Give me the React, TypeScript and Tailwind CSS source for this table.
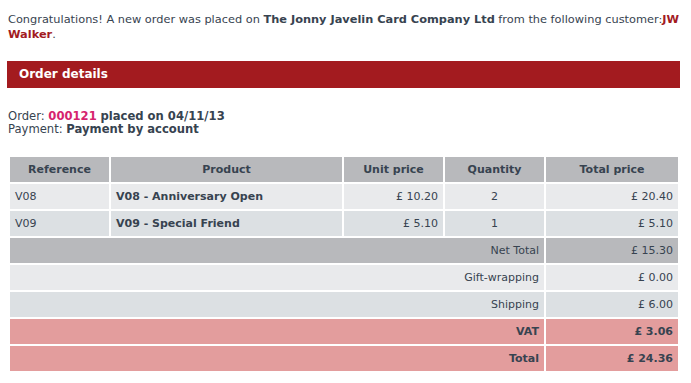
const rows = [
  { ref: 'V08', product: 'V08 - Anniversary Open', unit: '£ 10.20', qty: '2', total: '£ 20.40', bg: 'bg-[#e9eaec]' },
  { ref: 'V09', product: 'V09 - Special Friend', unit: '£ 5.10', qty: '1', total: '£ 5.10', bg: 'bg-[#dce0e3]' },
];

const totals = [
  { label: 'Net Total', value: '£ 15.30', bg: 'bg-[#b8b9bc]', bold: false },
  { label: 'Gift-wrapping', value: '£ 0.00', bg: 'bg-[#e9eaec]', bold: false },
  { label: 'Shipping', value: '£ 6.00', bg: 'bg-[#dce0e3]', bold: false },
  { label: 'VAT', value: '£ 3.06', bg: 'bg-[#e39d9d]', bold: true },
  { label: 'Total', value: '£ 24.36', bg: 'bg-[#e39d9d]', bold: true },
];

export default function App() {
  return (
    <div className="w-[691px] h-[383px] bg-white text-[#374350] text-[12px] leading-[15px] font-['DejaVu_Sans',Verdana,sans-serif] pt-[12px] pl-[8px] overflow-hidden">
      <p className="w-[678px] text-[11.35px]">
        Congratulations! A new order was placed on <b>The Jonny Javelin Card Company Ltd</b> from the following customer:
        <b className="text-[#a31b1f]">JW Walker</b>.
      </p>

      {/* Header bar */}
      <div className="mt-[19px] -ml-[1px] w-[673px] h-[27px] bg-[#a31b1f] flex items-center pl-[12px]">
        <span className="text-white font-bold text-[12px]">Order details</span>
      </div>

      <div className="mt-[22px] leading-[13px] text-[11.6px]">
        <div>
          Order: <b className="text-[#d6246e]">000121</b> <b>placed on 04/11/13</b>
        </div>
        <div>
          Payment: <b>Payment by account</b>
        </div>
      </div>

      <table className="mt-[19px] border-separate border-spacing-[2px] w-[672px] table-fixed text-[11px]">
        <colgroup>
          <col className="w-[99px]" />
          <col className="w-[231px]" />
          <col className="w-[99px]" />
          <col className="w-[99px]" />
          <col className="w-[132px]" />
        </colgroup>
        <thead>
          <tr className="h-[25px] font-bold">
            <th className="bg-[#b8b9bc] text-center">Reference</th>
            <th className="bg-[#b8b9bc] text-center">Product</th>
            <th className="bg-[#b8b9bc] text-center">Unit price</th>
            <th className="bg-[#b8b9bc] text-center">Quantity</th>
            <th className="bg-[#b8b9bc] text-center">Total price</th>
          </tr>
        </thead>
        <tbody>
          {rows.map((r) => (
            <tr key={r.ref} className="h-[25px]">
              <td className={`${r.bg} px-[5px]`}>{r.ref}</td>
              <td className={`${r.bg} px-[5px] font-bold`}>{r.product}</td>
              <td className={`${r.bg} px-[5px] text-right`}>{r.unit}</td>
              <td className={`${r.bg} px-[5px] text-center`}>{r.qty}</td>
              <td className={`${r.bg} px-[5px] text-right`}>{r.total}</td>
            </tr>
          ))}
          {totals.map((t) => (
            <tr key={t.label} className={`h-[25px] ${t.bold ? 'font-bold' : ''}`}>
              <td colSpan={4} className={`${t.bg} px-[5px] text-right`}>{t.label}</td>
              <td className={`${t.bg} px-[5px] text-right`}>{t.value}</td>
            </tr>
          ))}
        </tbody>
      </table>
    </div>
  );
}
